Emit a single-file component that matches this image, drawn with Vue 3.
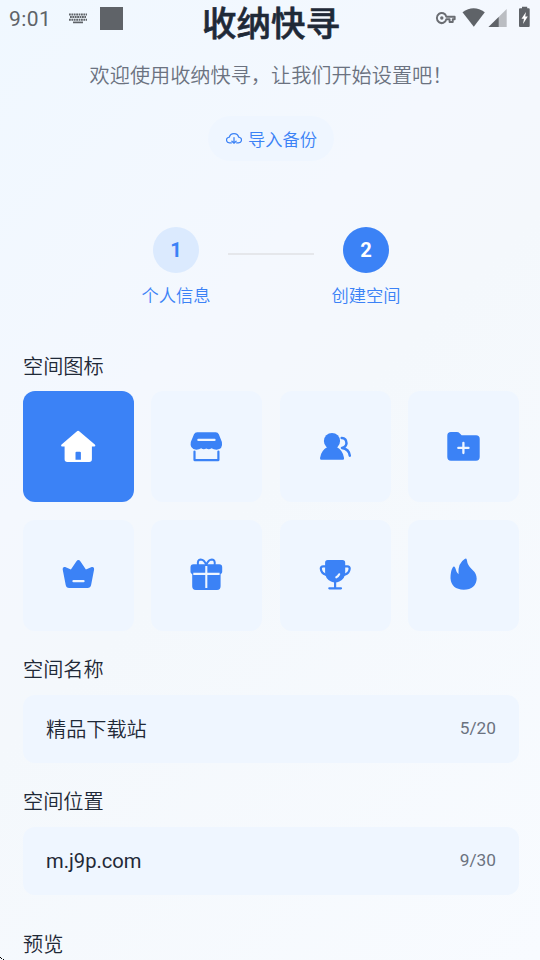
<script setup>
import { ref } from 'vue'

const icons = ['home', 'shop', 'people', 'folder', 'crown', 'gift', 'trophy', 'fire']
const selected = ref('home')
const fields = [
  { label: '空间名称', value: '精品下载站', count: '5/20' },
  { label: '空间位置', value: 'm.j9p.com', count: '9/30', latin: true }
]
</script>

<template>
  <div class="page">
    <div class="status">
      <div class="status-left">
        <span class="time">9:01</span>
        <svg class="keyboard" width="20" height="12" viewBox="0 0 20 12" fill="none" stroke="#5f6368">
          <path d="M1 1.5H19M1 6.7H19" stroke-width="2" stroke-dasharray="1.8 .6" />
          <path d="M2 4H18" stroke-width="2" stroke-dasharray="1.8 .6" />
          <path d="M5 9.4H15" stroke-width="1.7" />
        </svg>
        <span class="square"></span>
      </div>
      <svg width="100" height="24" viewBox="0 0 100 24">
        <path d="M11.8 12.1H20.5V14.4H18.5V17H15.2V14.4H11.8A5 4.8 0 1 1 11.8 12.1Z" transform="translate(0 .1) scale(.96 1.05)" fill="none" stroke="#6b6e73" stroke-width="2" stroke-linejoin="round" />
        <circle cx="6.8" cy="14" r="1.7" fill="#6b6e73" />
        <path d="M27.5 8.2Q38.6 .4 49.8 8.2L38.8 22.7Z" fill="#5f6368" />
        <path d="M71.7 5V23H53.5Z" fill="#babdc2" />
        <path d="M63.7 13V23H53.5Z" fill="#5f6368" />
        <path d="M85.5 4.2H87V2.8H92.2V4.2H93.7Q94.7 4.2 94.7 5.2V22Q94.7 23 93.7 23H85Q84 23 84 22V5.2Q84 4.2 85 4.2Z" fill="#5f6368" />
        <path d="M91 7.9L86.5 14.7H89L88 19.9L92.8 12.5H90.2Z" fill="#fff" />
      </svg>
    </div>

    <header>
      <h1>收纳快寻</h1>
      <p>欢迎使用收纳快寻，让我们开始设置吧！</p>
      <button class="import">
        <svg width="16" height="14" viewBox="0 0 16 14" fill="none" stroke="currentColor" stroke-width="1.25" stroke-linecap="round" stroke-linejoin="round">
          <path d="M5.3 10.9H4A3.2 2.9 0 0 1 3.4 5.1Q4.1 1.5 8 1.5T12.6 5.1A3.2 2.9 0 0 1 12 10.9H10.7M8 5.6V11.2M5.9 9.2L8 11.2L10.1 9.2" />
        </svg>
        <span>导入备份</span>
      </button>
    </header>

    <div class="steps">
      <div class="step done"><b>1</b><span>个人信息</span></div>
      <i class="line"></i>
      <div class="step current"><b>2</b><span>创建空间</span></div>
    </div>

    <section class="icons">
      <h2>空间图标</h2>
      <div class="grid">
        <button v-for="icon in icons" :key="icon" class="tile" :class="{ active: selected === icon }" @click="selected = icon">
          <svg width="37" height="37" viewBox="-.5 -.5 37 37" fill="currentColor" stroke-linecap="round" stroke-linejoin="round">
            <path v-if="icon === 'home'" fill-rule="evenodd" d="M16.8 2.5Q17.6 1.9 18.4 2.5L34.6 16.2Q35.4 17.9 34 18.1H31.4V30.7Q31.4 33.4 28.7 33.4H6.8Q4.1 33.4 4.1 30.7V18.1H1.4Q.1 17.7.8 16.2ZM16 23.2Q15 23.2 15 24.2V31.2H20.4V24.2Q20.4 23.2 19.4 23.2Z" />
            <g v-else-if="icon === 'shop'">
              <path d="M8.7 3.8H27.2Q29.4 3.8 30.3 5.7L33.4 13.5Q34.7 20.8 28 21.2Q25 21.2 23 19.8Q20.5 21.6 17.8 20Q15 21.6 12.7 19.8Q10.7 21.2 7.8 21.2Q.9 20.6 2.3 13.5L5.5 5.7Q6.4 3.8 8.7 3.8Z" />
              <path d="M9.8 11.4H26.1" fill="none" stroke="#eef5ff" stroke-width="2.1" />
              <path d="M6 23V31.6H29.9V23" fill="none" stroke="currentColor" stroke-width="2.2" />
            </g>
            <g v-else-if="icon === 'people'">
              <circle cx="14.5" cy="12.5" r="8.1" />
              <path d="M9.8 18.5H19.3Q25.5 22 26.5 29.3V30.2Q26.5 31.2 25.4 31.2H3.7Q2.6 31.2 2.6 30.2V29.3Q3.5 22 9.8 18.5Z" />
              <path d="M24.2 9.4Q28.8 9.3 29 14.7Q28.8 18.2 24.5 19.4Q31.7 20.5 32.3 27.2" fill="none" stroke="currentColor" stroke-width="2.5" />
            </g>
            <g v-else-if="icon === 'folder'">
              <path d="M5.5 3.6H11.2Q13.1 3.6 14.4 5L16.1 6.7H30.5Q34.2 6.7 34.2 10.3V28.6Q34.2 32.3 30.5 32.3H5.5Q1.8 32.3 1.8 28.6V7.2Q1.8 3.6 5.5 3.6Z" />
              <path d="M12.8 19.4H23M17.9 14.3V24.5" fill="none" stroke="#eef5ff" stroke-width="2.3" />
            </g>
            <g v-else-if="icon === 'crown'">
              <path d="M15.8 3.9Q17.9 1.2 20 3.9L25.4 12.1L31.2 9.6Q34.1 9 33.6 12L30.6 27.4Q30 30.4 27 30.4H8.7Q5.7 30.4 5.2 27.4L2.2 12Q1.7 9 4.7 9.6L10.4 12.1Z" />
              <path d="M13 23.7H23" fill="none" stroke="#eef5ff" stroke-width="2.3" />
            </g>
            <g v-else-if="icon === 'gift'">
              <path d="M5 6.7H30.7Q33.7 6.7 33.7 9.7V14.5Q33.7 16 32.1 16.4V28.8Q32.1 32.4 28.5 32.4H7.3Q3.7 32.4 3.7 28.8V16.4Q2 16 2 14.5V9.7Q2 6.7 5 6.7Z" />
              <path d="M9.5 7.5Q8.6 2.3 12.2 2Q15.8 2 17.8 7.5Q19.8 2 23.4 2Q27 2.3 26.1 7.5" fill="none" stroke="currentColor" stroke-width="2" />
              <path d="M4.8 16.4H31.1M17.8 8.6V30.5" fill="none" stroke="#eef5ff" stroke-width="2.1" stroke-linecap="butt" />
            </g>
            <g v-else-if="icon === 'trophy'">
              <path d="M10.2 2.6H25Q27.7 2.6 27.7 5.3V15Q27.7 21.3 21.8 24Q17.7 26 13.5 24Q7.6 21.3 7.6 15V5.3Q7.6 2.6 10.2 2.6Z" />
              <path d="M7.7 8.8H5.6Q3.3 8.8 3.3 11.2Q3.7 15.8 8.3 17.3M27.6 8.8H29.9Q32.2 8.8 32.2 11.2Q31.8 15.8 27.2 17.3M17.6 24V30.5M11.8 30.8H23.5" fill="none" stroke="currentColor" stroke-width="2.2" />
              <path d="M21.7 16.8Q20.7 19 18.8 19.8" fill="none" stroke="#eef5ff" stroke-width="2.1" />
            </g>
            <path v-else d="M19.2 1.4Q20.9.3 21.3 2.3Q22 8.2 26.6 12Q31.2 16 31.2 21.2Q30.5 31.8 18.2 32.3Q5.8 31.8 5 20.8Q4.9 14 7.2 10Q8.4 8.1 9.7 10.2Q10.8 14.7 13 16.7Q12.1 5.5 19.2 1.4Z" />
          </svg>
        </button>
      </div>
    </section>

    <section v-for="field in fields" :key="field.label" class="field">
      <h2>{{ field.label }}</h2>
      <div class="input"><span :class="{ latin: field.latin }">{{ field.value }}</span><small>{{ field.count }}</small></div>
    </section>

    <section class="preview"><h2>预览</h2></section>
    <svg class="corner" width="4" height="4" viewBox="0 0 4 4"><path d="M0 1H1V2H0ZM1 2H2V3H1ZM3 3H4V4H3Z" fill="#000" /></svg>
  </div>
</template>

<style>
body { margin: 0; }
</style>

<style scoped>
.page { position: relative; box-sizing: border-box; width: 540px; height: 960px; padding: 0 21px 0 23px; overflow: hidden; color: #1f2937; font-family: Roboto, "Noto Sans CJK SC", sans-serif; font-weight: 350; background: linear-gradient(135deg, #f0f8ff, #f4f8fe 35%, #f4f8fc 50%, #f8fbff); }
button { border: 0; padding: 0; font: inherit; }
h1, h2, p { margin: 0; }
.status { position: absolute; z-index: 2; top: 0; left: 9px; right: 5px; height: 37px; display: flex; justify-content: space-between; color: #5f6368; font-weight: 400; }
.status-left { display: flex; align-items: center; }
.time { font-size: 21px; letter-spacing: .4px; width: 59px; }
.keyboard { margin-right: 12px; }
.square { width: 23px; height: 23px; background: #5f6368; }
.status > svg { margin: 4px 0 0; }
header { display: flex; flex-direction: column; align-items: center; }
h1 { height: 46px; line-height: 48px; font-size: 34.5px; font-weight: 500; -webkit-text-stroke: .6px currentColor; }
header p { margin-top: 14px; height: 30px; line-height: 32px; font-size: 20.16px; color: #6b7280; white-space: nowrap; }
.import { display: flex; align-items: center; justify-content: center; gap: 6px; margin-top: 26px; padding-left: 1px; box-sizing: border-box; width: 126px; height: 45px; border-radius: 23px; background: #eff6ff; color: #3b82f6; font-size: 17.28px; }
.steps { display: flex; justify-content: center; gap: 18px; margin-top: 66px; height: 83px; }
.step { width: 68px; display: flex; flex-direction: column; align-items: center; color: #3b82f6; }
.step b { width: 46px; height: 46px; line-height: 46px; text-align: center; border-radius: 50%; font-size: 20.16px; font-weight: 700; background: #dbeafe; }
.step.current b { color: #fff; background: #3b82f6; }
.step span { margin-top: 8px; line-height: 30px; font-size: 17.28px; white-space: nowrap; }
.line { width: 86px; height: 2px; margin-top: 26px; background: #e5e7eb; }
h2 { height: 30px; line-height: 32px; font-size: 20.16px; font-weight: 350; }
.icons { margin-top: 41px; }
.grid { display: grid; grid-template-columns: repeat(4, 1fr); column-gap: 17.3px; row-gap: 18px; margin-top: 10px; }
.tile { height: 111px; display: flex; align-items: center; justify-content: center; border-radius: 12px; color: #3b82f6; background: #eff6ff; }
.tile.active { color: #fff; background: #3b82f6; }
.field { margin-top: 23px; }
.input { display: flex; align-items: center; justify-content: space-between; margin-top: 10.5px; height: 68.6px; padding: 0 23px; border-radius: 12px; background: #eff6ff; font-size: 20.16px; }
.input .latin { font-weight: 400; }
.input small { padding-bottom: 2px; font-size: 17.28px; font-weight: 400; color: #6b7280; }
.preview { margin-top: 33.5px; }
.corner { position: absolute; left: 0; bottom: 0; }
</style>
